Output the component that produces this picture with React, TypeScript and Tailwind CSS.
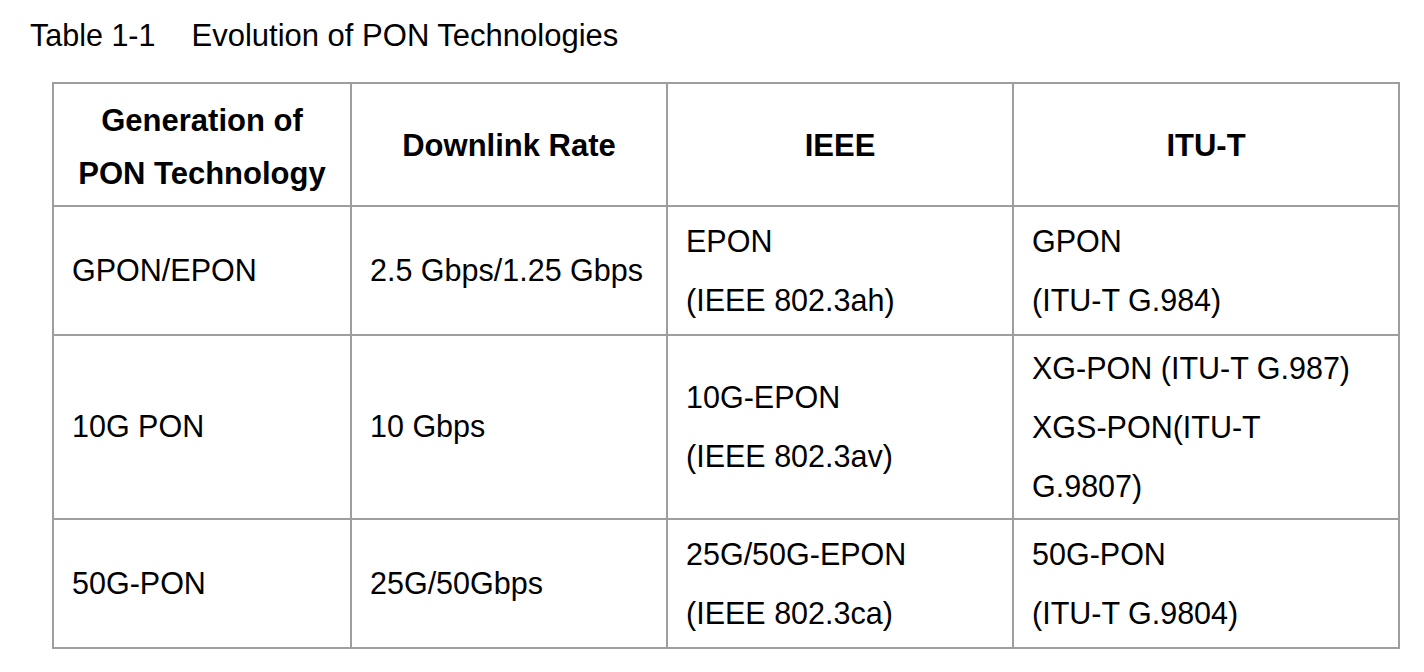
import React from 'react';

interface Row {
  gen: string;
  rate: string;
  ieee: string[];
  itu: string[];
  height: string;
}

const rows: Row[] = [
  { gen: 'GPON/EPON', rate: '2.5 Gbps/1.25 Gbps', ieee: ['EPON', '(IEEE 802.3ah)'], itu: ['GPON', '(ITU-T G.984)'], height: 'h-[129px]' },
  { gen: '10G PON', rate: '10 Gbps', ieee: ['10G-EPON', '(IEEE 802.3av)'], itu: ['XG-PON (ITU-T G.987)', 'XGS-PON(ITU-T', 'G.9807)'], height: 'h-[184px]' },
  { gen: '50G-PON', rate: '25G/50Gbps', ieee: ['25G/50G-EPON', '(IEEE 802.3ca)'], itu: ['50G-PON', '(ITU-T G.9804)'], height: 'h-[129px]' },
];

function Lines({ items }: { items: string[] }) {
  return (
    <div className="flex flex-col">
      {items.map((t, i) => (
        <span key={i} className="leading-[59px] whitespace-nowrap">{t}</span>
      ))}
    </div>
  );
}

const cell = 'border-2 border-[#9e9e9e] pl-[18px] pr-[10px] align-middle whitespace-nowrap';
const head = 'border-2 border-[#9e9e9e] font-bold text-center px-[10px] pt-[4px] text-[31px]';

export default function App() {
  return (
    <div className="w-[1424px] h-[672px] bg-white text-black font-['Liberation_Sans',Arial,sans-serif]">
      <div className="pt-[16px] pl-[30px] text-[30.5px] leading-[38px]">
        <span>Table 1-1</span>
        <span className="ml-[36px] text-[31px]">Evolution of PON Technologies</span>
      </div>
      <table className="ml-[52px] mt-[27px] border-collapse border-2 border-[#9e9e9e] text-[30.5px] table-fixed w-[1346px]">
        <colgroup>
          <col className="w-[298px]" />
          <col className="w-[316px]" />
          <col className="w-[346px]" />
          <col className="w-[386px]" />
        </colgroup>
        <thead>
          <tr className="h-[123px]">
            <th className={`${head} leading-[53px]`}>
              Generation of<br />PON Technology
            </th>
            <th className={head}>Downlink Rate</th>
            <th className={head}>IEEE</th>
            <th className={head}>ITU-T</th>
          </tr>
        </thead>
        <tbody>
          {rows.map((r) => (
            <tr key={r.gen} className={r.height}>
              <td className={cell}>{r.gen}</td>
              <td className={cell}>{r.rate}</td>
              <td className={cell}><Lines items={r.ieee} /></td>
              <td className={cell}><Lines items={r.itu} /></td>
            </tr>
          ))}
        </tbody>
      </table>
    </div>
  );
}
